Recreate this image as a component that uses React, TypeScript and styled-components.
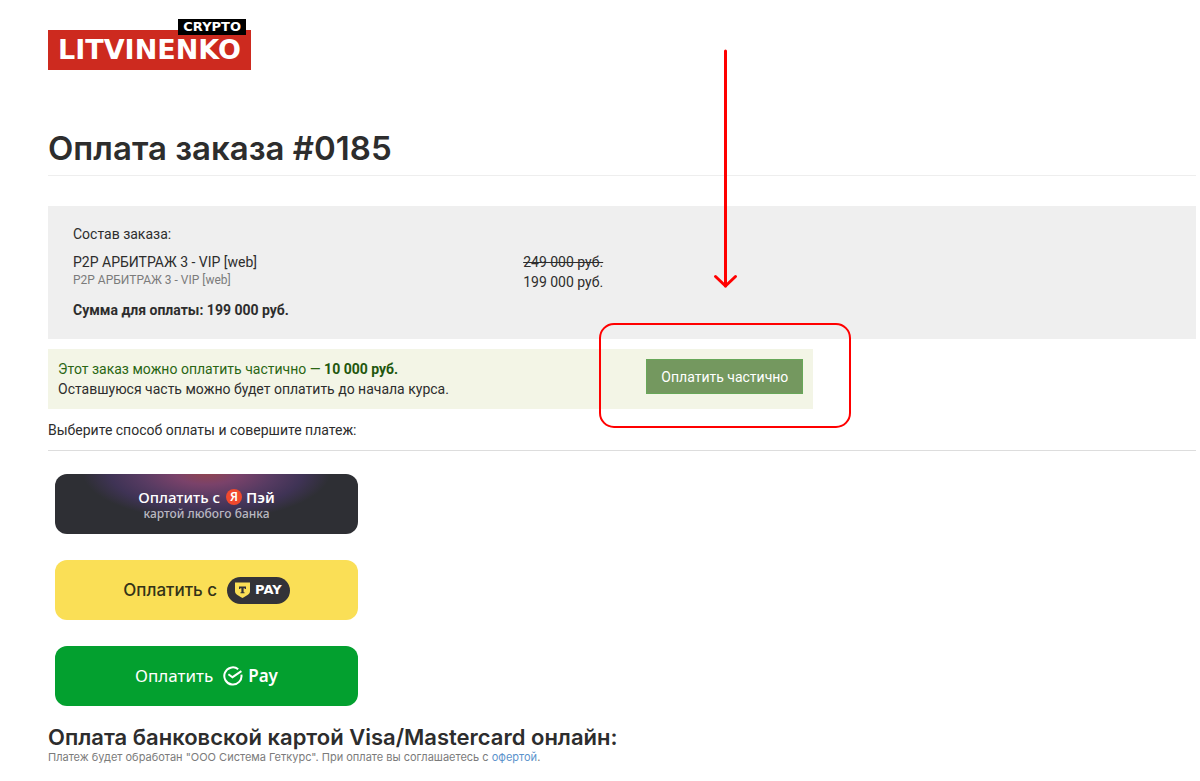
import React from 'react';
import styled, { createGlobalStyle } from 'styled-components';

const GlobalStyle = createGlobalStyle`
  * { box-sizing: border-box; }
  body {
    margin: 0;
    background: #fff;
    color: #2d2d2d;
    font-family: Roboto, 'Noto Sans', sans-serif;
    font-size: 14px;
    line-height: 20px;
  }
  button { font-family: inherit; cursor: pointer; }
`;

const Page = styled.div`
  position: relative;
  padding: 19px 4px 16px 48px;
`;

const Logo = styled.a`
  position: relative;
  display: block;
  width: 203px;
  padding-top: 11px;
  color: #fff;
  font-family: 'DejaVu Sans', sans-serif;
  font-weight: 700;
  text-decoration: none;
`;

const LogoName = styled.span`
  display: block;
  height: 40px;
  background: #cd2a1f;
  font-size: 27px;
  line-height: 40px;
  text-align: center;
`;

const LogoTag = styled.span`
  position: absolute;
  top: 0;
  right: 5px;
  padding: 0 5px;
  background: #000;
  font-size: 13px;
  line-height: 16px;
`;

const Title = styled.h1`
  margin: 56px 0 30px;
  padding-bottom: 5px;
  border-bottom: 1px solid #eee;
  font-family: Inter, sans-serif;
  font-size: 33px;
  line-height: 44px;
  font-weight: 600;
`;

const Order = styled.section`
  padding: 18px 25px 19px;
  background: #efefef;
`;

const OrderRow = styled.div`
  display: grid;
  grid-template-columns: 41fr 59fr;
  margin: 8px 0;
`;

const Line = styled.div<{ $bold?: boolean }>`
  font-weight: ${(p) => (p.$bold ? 700 : 400)};
`;

const Note = styled.div`
  color: #7b7b7b;
  font-size: 12px;
  line-height: 16px;
`;

const OldPrice = styled.s`
  display: block;
`;

const Partial = styled.section`
  display: flex;
  justify-content: space-between;
  align-items: flex-start;
  width: calc(100% * 2 / 3);
  margin: 10px 0 11px;
  padding: 10px;
  background: #f3f5e6;
`;

const Green = styled.div`
  color: #2a6613;
  b { font-weight: 700; color: #22570e; }
`;

const Highlighted = styled.div`
  position: relative;
`;

const Frame = styled.div`
  position: absolute;
  inset: -36px -48px -34px -47px;
  border: 2px solid #f00;
  border-radius: 15px;
  pointer-events: none;
`;

const PartialButton = styled.button`
  display: block;
  height: 35px;
  padding: 0 14px;
  border: 1px solid #67a758;
  background: #74985f;
  color: #fff;
  font-size: 14px;
`;

const Arrow = styled.svg`
  position: absolute;
  top: 49px;
  left: 713px;
  pointer-events: none;
`;

const Choose = styled.p`
  margin: 0 0 23px;
  padding-bottom: 10px;
  border-bottom: 1px solid #ddd;
`;

const Methods = styled.div`
  display: flex;
  flex-direction: column;
  align-items: flex-start;
  gap: 26px;
  padding-left: 7px;
`;

const PayButton = styled.button<{ $bg: string; $color?: string; $font: string }>`
  display: flex;
  flex-direction: column;
  align-items: center;
  justify-content: center;
  width: 303px;
  height: 60px;
  padding: 0;
  border: 0;
  border-radius: 12px;
  background: ${(p) => p.$bg};
  color: ${(p) => p.$color || '#fff'};
  font-family: ${(p) => p.$font};
`;

const PayLine = styled.span<{ $size: number; $gap: number; $weight: number }>`
  display: flex;
  align-items: center;
  gap: ${(p) => p.$gap}px;
  font-size: ${(p) => p.$size}px;
  font-weight: ${(p) => p.$weight};
  line-height: 20px;
`;

const PaySub = styled.span`
  color: #b9b8c0;
  font-size: 12px;
  font-weight: 500;
  line-height: 14px;
`;

const YaMark = styled.span`
  width: 16px;
  height: 16px;
  border-radius: 50%;
  background: #f0492e;
  font-size: 12px;
  line-height: 16px;
  text-align: center;
`;

const YaWords = styled.span`
  display: flex;
  align-items: center;
  gap: 4px;
  font-weight: 600;
`;

const TBadge = styled.span`
  display: flex;
  align-items: center;
  gap: 5px;
  height: 27px;
  padding: 0 8px;
  border-radius: 14px;
  background: #333338;
  color: #fff;
  font-family: 'DejaVu Sans', sans-serif;
  font-size: 13px;
  font-weight: 700;
`;

const SberMark = styled.span`
  display: flex;
  align-items: center;
  gap: 5px;
  font-weight: 600;
`;

const CardTitle = styled.h2`
  margin: 17px 0 0;
  font-family: Inter, sans-serif;
  font-size: 22px;
  line-height: 28px;
  font-weight: 600;
`;

const Legal = styled.p`
  margin: 0;
  color: #7b7b7b;
  font-family: Inter, sans-serif;
  font-size: 11px;
  line-height: 12px;
  a { color: #5b93cc; text-decoration: none; }
`;

export default function App() {
  return (
    <>
      <GlobalStyle />
      <Page>
        <Logo href="#">
          <LogoName>LITVINENKO</LogoName>
          <LogoTag>CRYPTO</LogoTag>
        </Logo>
        <Title>Оплата заказа #0185</Title>
        <Order>
          <Line>Состав заказа:</Line>
          <OrderRow>
            <div>
              <Line>P2P АРБИТРАЖ 3 - VIP [web]</Line>
              <Note>P2P АРБИТРАЖ 3 - VIP [web]</Note>
            </div>
            <div>
              <OldPrice>249 000 руб.</OldPrice>
              <Line>199 000 руб.</Line>
            </div>
          </OrderRow>
          <Line $bold>Сумма для оплаты: 199 000 руб.</Line>
        </Order>
        <Partial>
          <div>
            <Green>
              Этот заказ можно оплатить частично — <b>10 000 руб.</b>
            </Green>
            <Line>Оставшуюся часть можно будет оплатить до начала курса.</Line>
          </div>
          <Highlighted>
            <PartialButton type="button">Оплатить частично</PartialButton>
            <Frame />
          </Highlighted>
        </Partial>
        <Choose>Выберите способ оплаты и совершите платеж:</Choose>
        <Methods>
          <PayButton
            type="button"
            $font="'Noto Sans', sans-serif"
            $bg="radial-gradient(ellipse 124px 48px at 50% -2px, #91454f 0%, #7a426a 26%, #573b62 54%, #3f3355 78%, #2e2f34 100%)"
          >
            <PayLine $size={15} $gap={6} $weight={500}>
              Оплатить с
              <YaWords>
                <YaMark>Я</YaMark>
                Пэй
              </YaWords>
            </PayLine>
            <PaySub>картой любого банка</PaySub>
          </PayButton>
          <PayButton type="button" $font="Inter, sans-serif" $bg="#fadf56" $color="#333318">
            <PayLine $size={17} $gap={10} $weight={500}>
              Оплатить с
              <TBadge>
                <svg width="15" height="16" viewBox="0 0 15 16" aria-hidden="true">
                  <path d="M0 0.5H15V9C15 12 12.8 13 7.5 16C2.2 13 0 12 0 9Z" fill="#fadf56" />
                  <path d="M4 4.5H11V7H9.8V6.2H8.6V10.2H9.5V11.3H5.5V10.2H6.4V6.2H5.2V7H4Z" fill="#333338" />
                </svg>
                PAY
              </TBadge>
            </PayLine>
          </PayButton>
          <PayButton type="button" $font="'Noto Sans', sans-serif" $bg="#03a02f">
            <PayLine $size={17} $gap={10} $weight={400}>
              Оплатить
              <SberMark>
                <svg width="20" height="20" viewBox="0 0 20 20" fill="none" stroke="#fff" strokeWidth="2" aria-hidden="true">
                  <path d="M15.2 3.2A8.6 8.6 0 1 0 18.4 8.6" />
                  <path d="M5.4 8.2L9.5 11.2L18.4 5.2" />
                </svg>
                Pay
              </SberMark>
            </PayLine>
          </PayButton>
        </Methods>
        <CardTitle>Оплата банковской картой Visa/Mastercard онлайн:</CardTitle>
        <Legal>
          Платеж будет обработан "ООО Система Геткурс". При оплате вы соглашаетесь с <a href="#">офертой</a>.
        </Legal>
        <Arrow width="25" height="241" viewBox="0 0 25 241" fill="none" stroke="#f00" strokeWidth="3" strokeLinecap="round" strokeLinejoin="round" aria-hidden="true">
          <path d="M12.5 2V237" />
          <path d="M2.5 227.5L12.5 237L22.5 227.5" />
        </Arrow>
      </Page>
    </>
  );
}
